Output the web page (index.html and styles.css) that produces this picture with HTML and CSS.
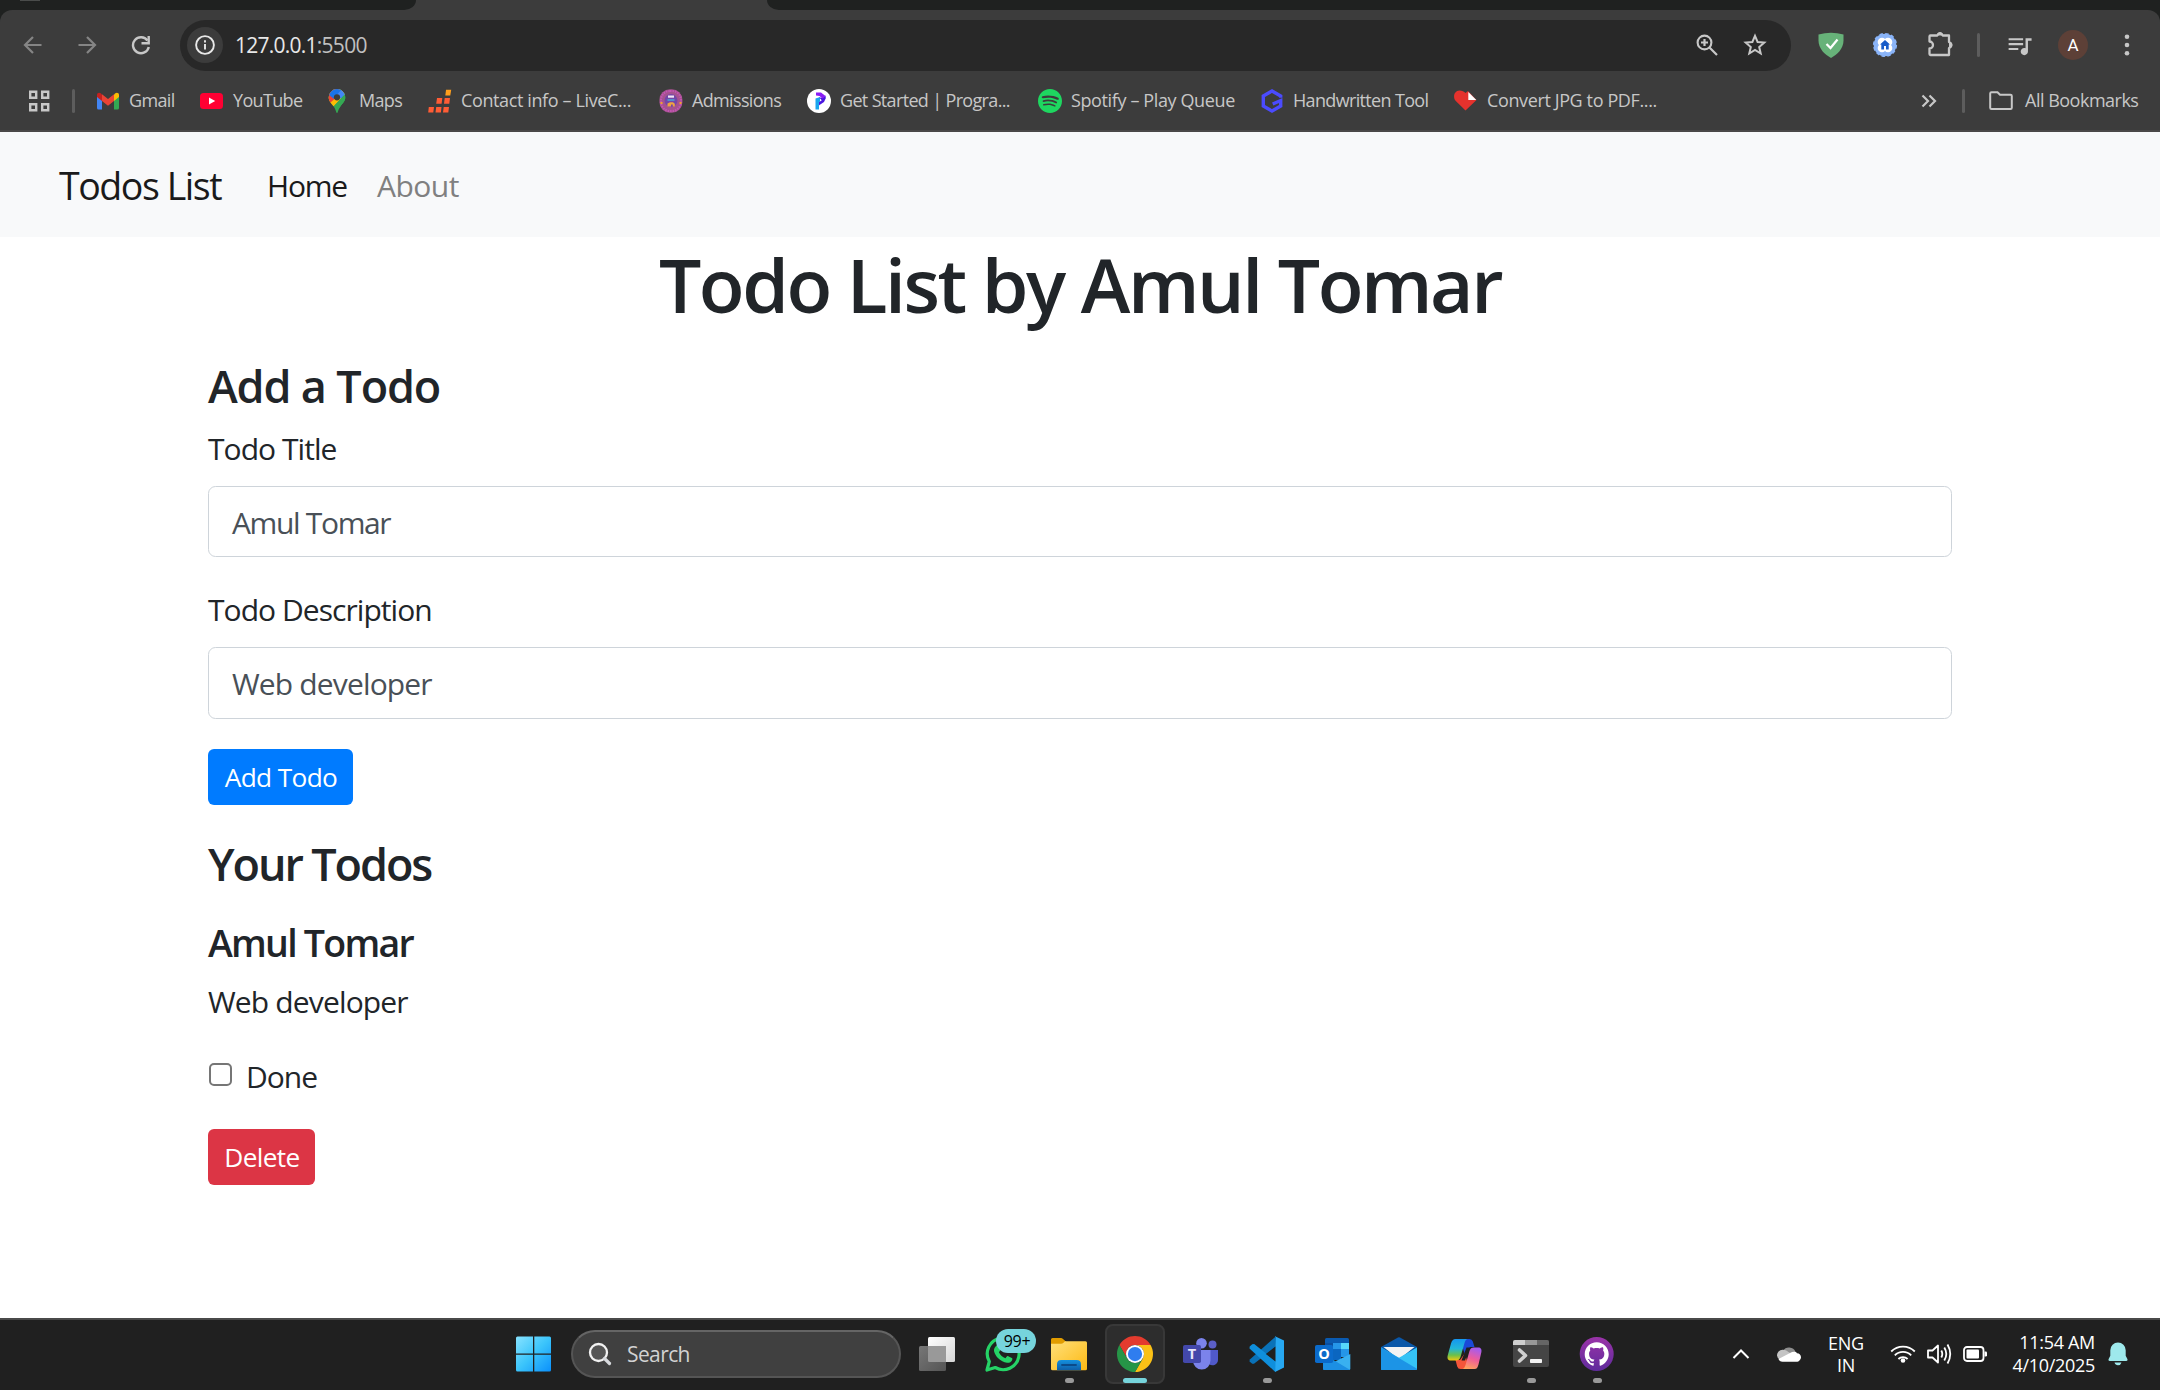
FILE: index.html
```html
<!DOCTYPE html>
<html lang="en">
<head>
<meta charset="utf-8">
<title>Todos List</title>
<link rel="stylesheet" href="styles.css">
</head>
<body>
<div class="screen">

  <header class="browser">
    <div class="tabstrip">
      <div class="tabs-left"><span class="tab-icon"></span></div>
      <div class="tabs-right"></div>
    </div>

    <div class="chrome-panel">
    <div class="toolbar">
      <div class="nav-buttons">
        <svg class="dim" width="20" height="20" viewBox="0 0 20 20"><path d="M18.500 10H2.500M10 2L2 10l8 8" fill="none" stroke="currentColor" stroke-width="2.200"/></svg>
        <svg class="dim" width="20" height="20" viewBox="0 0 20 20"><path d="M1.500 10h16M10 2l8 8-8 8" fill="none" stroke="currentColor" stroke-width="2.200"/></svg>
        <svg width="20" height="20" viewBox="0 0 20 20"><path d="M16.500 5.500A8 8 0 1 0 17.800 12" fill="none" stroke="currentColor" stroke-width="2.400"/><path d="M17.700 1v7.200h-7.200" fill="none" stroke="currentColor" stroke-width="2.400"/></svg>
      </div>
      <div class="omnibox">
        <span class="site-info">
          <svg width="22" height="22" viewBox="0 0 22 22"><circle cx="11" cy="11" r="8.900" fill="none" stroke="currentColor" stroke-width="1.900"/><path d="M11 10v5.500M11 6.200v2.200" stroke="currentColor" stroke-width="1.900"/></svg>
        </span>
        <span class="url">127.0.0.1<span class="port">:5500</span></span>
        <svg class="zoom-icon" width="24" height="24" viewBox="0 0 24 24"><circle cx="9.500" cy="9.500" r="6.900" fill="none" stroke="currentColor" stroke-width="2.100"/><path d="M14.500 14.500l7.500 7.500M9.500 6v7M6 9.500h7" fill="none" stroke="currentColor" stroke-width="2.200"/></svg>
        <svg width="24" height="24" viewBox="0 0 24 24"><path d="M12 2.800l2.600 6.200 6.700.6-5.100 4.400 1.500 6.500L12 17l-5.700 3.500 1.500-6.500L2.700 9.600l6.700-.6z" fill="none" stroke="currentColor" stroke-width="2"/></svg>
      </div>
      <div class="extensions">
        <svg width="26" height="26" viewBox="0 0 26 26"><path d="M.5 2.500Q13-1.200 25.500 2.500V8.500C25.500 17 19 22.500 13 26 7 22.500.5 17 .5 8.500z" fill="#67b279"/><path d="M8.500 12l4 4 7-8.500" fill="none" stroke="#fff" stroke-width="2.200"/></svg>
        <svg width="26" height="26" viewBox="0 0 26 26"><circle cx="13" cy="13" r="11.300" fill="#8ab4f8"/><circle cx="13" cy="13" r="11.300" fill="none" stroke="#8ab4f8" stroke-width="1.600" stroke-dasharray="3.500 2.400"/><g fill="#fff"><circle cx="10" cy="10" r="4.300"/><circle cx="16" cy="10" r="4.300"/><circle cx="10" cy="16" r="4.300"/><circle cx="16" cy="16" r="4.300"/></g><path d="M13 8l-5 4.500h1.300v5H12V14h2v3.500h2.700v-5H18z" fill="#1a5dc8"/></svg>
        <svg width="28" height="28" viewBox="0 0 28 28"><path d="M4.500 5.500h6.700a3 3 0 0 1 5.600 0h6.200v6.500a3.200 3.200 0 0 1 0 6v7H4.500a1 1 0 0 1-1-1v-5.500a3.500 3.500 0 0 0 0-7V6.500a1 1 0 0 1 1-1z" fill="none" stroke="currentColor" stroke-width="2.300" stroke-linejoin="round"/><path d="M11 5.500a3 3.500 0 0 1 6 0zM23 12a3.500 3 0 0 1 0 6z" fill="currentColor"/></svg>
        <span class="divider"></span>
        <svg class="media" width="29" height="29" viewBox="0 0 24 24"><path fill="currentColor" d="M15 6H3v1.700h12V6zm0 4H3v1.700h12V10zM3 15.700h8V14H3v1.700zM17 6v8.180c-.31-.11-.65-.18-1-.18-1.660 0-3 1.340-3 3s1.340 3 3 3 3-1.340 3-3V8h3V6h-5z"/></svg>
        <span class="avatar">A</span>
        <svg class="menu" width="6" height="24" viewBox="0 0 6 24"><g fill="currentColor"><circle cx="3" cy="3.800" r="2.300"/><circle cx="3" cy="12" r="2.300"/><circle cx="3" cy="20.200" r="2.300"/></g></svg>
      </div>
    </div>

    <nav class="bookmarks">
      <svg width="24" height="24" viewBox="0 0 24 24"><path d="M2 2h6v6H2zM14 2h6v6h-6zM2 14.500h6v6H2zM14 14.500h6v6h-6z" transform="translate(.2 .8)" fill="none" stroke="currentColor" stroke-width="2.400"/></svg>
      <span class="divider"></span>
      <span class="bookmark"><svg width="24" height="24" viewBox="0 0 24 24"><path d="M1 6v13q0 1.500 1.500 1.500H6V10z" fill="#4285f4"/><path d="M23 6v13q0 1.500-1.500 1.500H18V10z" fill="#34a853"/><path d="M18 5.500V12l5-4V6c0-2.500-2.500-3-4-1.500z" fill="#fbbc04"/><path d="M6 5.500V12L1 8V6c0-2.500 2.500-3 4-1.500z" fill="#c5221f"/><path d="M6 5.200l6 4.800 6-4.800V12l-6 4.800L6 12z" fill="#ea4335"/></svg><span class="tight">Gmail</span></span>
      <span class="bookmark"><svg width="24" height="24" viewBox="0 0 24 24"><rect x="0" y="4" width="23" height="16" rx="3.500" fill="#ff0033"/><path d="M9 8.500v7l6.200-3.500z" fill="#fff"/></svg><span class="tight">YouTube</span></span>
      <span class="bookmark"><svg width="24" height="24" viewBox="0 0 24 24"><clipPath id="pin"><path d="M11 0a8.300 8.300 0 0 0-8.300 8.300c0 4 2.500 6 4.600 8.700 1.900 2.500 2.400 4.500 3.100 6.500.3.700.9.700 1.200 0 .7-2 1.200-4 3.100-6.500 2.100-2.700 4.600-4.700 4.600-8.700A8.300 8.300 0 0 0 11 0z"/></clipPath><g clip-path="url(#pin)"><rect width="24" height="24" fill="#34a853"/><path d="M0 0h24L8 17 0 20z" fill="#fbbc04"/><path d="M0 0h13v6L4 14 0 8z" fill="#ea4335"/><path d="M5 0h12l-9 10-5-4z" fill="#1a73e8"/><path d="M16 0l5 7-8 3-3-3z" fill="#4285f4"/><path d="M19 5l2 5-8 10-5-3z" fill="#34a853"/></g><circle cx="11" cy="8.300" r="3.100" fill="#3c3c3c"/></svg><span class="tight">Maps</span></span>
      <span class="bookmark"><svg width="24" height="24" viewBox="0 0 24 24"><path d="M18 .7h5.200l-.9 5.700h-5z" fill="#ff9f1c"/><path d="M9 9h5.300l-.7 5.800H8.200zM16.700 9H22l-.7 5.800H16zM.8 18H6l-.7 5.500H.2zM8.200 18h5.300l-.6 5.500H7.500zM15.700 18H21l-.7 5.500H15z" fill="#ff5c35"/></svg><span>Contact info – LiveC...</span></span>
      <span class="bookmark"><svg width="24" height="24" viewBox="0 0 24 24"><rect x=".4" y=".2" width="23" height="23.600" rx="10.500" fill="#a5528f"/><rect x="2" y="2" width="20" height="20" rx="9" fill="none" stroke="#c455b4" stroke-width="2" stroke-dasharray="1.500 1"/><circle cx="12" cy="11.500" r="6.500" fill="#7446a8"/><path d="M9 6.500h6v2.200H9z" fill="#f3e4f4"/><path d="M8.500 11h7" stroke="#4aa6d8" stroke-width="1.500"/><path d="M8.500 17.500v-3l2.500-1.200h3l1.800 1.500v2.700h-2v-2h-1.800v2z" fill="#f0a340"/><path d="M1.500 14h2M20.500 14h2" stroke="#f0a030" stroke-width="2"/></svg><span class="tight">Admissions</span></span>
      <span class="bookmark"><svg width="24" height="24" viewBox="0 0 24 24"><circle cx="12" cy="12" r="12" fill="#fff"/><path d="M8.500 9.500L13 8v4.500l-1 1.500v6.500H8.500z" fill="#1aa5ee"/><path d="M12.200 8.500l3.300.2 3-2.200.3 2.700-1.800 3.800-4.500 3-.5.500v-3.300l2.800-2z" fill="#4a16e0"/><path d="M9 3.500h5l4.500 3.500-3 2.500-3-2.500-3.500-.5z" fill="#8a1cf4"/></svg><span class="tight">Get Started | Progra...</span></span>
      <span class="bookmark"><svg width="24" height="24" viewBox="0 0 24 24"><path fill="#1ed760" d="M12 0C5.400 0 0 5.400 0 12s5.400 12 12 12 12-5.400 12-12S18.660 0 12 0zm5.521 17.340c-.24.359-.66.48-1.021.24-2.820-1.740-6.360-2.101-10.561-1.141-.418.122-.779-.179-.899-.539-.12-.421.18-.78.54-.9 4.560-1.021 8.520-.6 11.640 1.320.42.18.479.659.301 1.020zm1.440-3.300c-.301.42-.841.6-1.262.3-3.239-1.980-8.159-2.580-11.939-1.380-.479.12-1.020-.12-1.140-.6-.12-.48.12-1.021.6-1.141C9.600 9.900 15 10.561 18.720 12.840c.361.181.54.78.241 1.200zm.12-3.360C15.240 8.400 8.820 8.160 5.160 9.301c-.6.179-1.200-.181-1.380-.721-.18-.601.18-1.200.72-1.381 4.260-1.260 11.280-1.020 15.721 1.621.539.3.719 1.020.419 1.560-.299.421-1.020.599-1.559.3z"/></svg><span>Spotify – Play Queue</span></span>
      <span class="bookmark"><svg width="24" height="24" viewBox="0 0 24 24"><path d="M20.700 8.800V7L12 2 3.300 7v10L12 22l8.700-5v-5.500l-8 3.500" fill="none" stroke="#4b4bff" stroke-width="3.400"/></svg><span class="tight">Handwritten Tool</span></span>
      <span class="bookmark"><svg width="24" height="24" viewBox="0 0 24 24"><path d="M11.500 21.500L1.800 12C-1.500 8.500 0 1.800 5.500 1.500c2.500 0 4.500 1 6 2.500l2.500-2 8.500 9z" fill="#e5322d"/><path d="M14.300 3v8h8z" fill="#fff"/></svg><span>Convert JPG to PDF....</span></span>
      <span></span>
      <svg width="16" height="24" viewBox="0 0 16 24"><path d="M1.500 6.500L7 12l-5.500 5.500M8.500 6.500L14 12l-5.500 5.500" fill="none" stroke="currentColor" stroke-width="2.200"/></svg>
      <span class="divider"></span>
      <span class="bookmark all"><svg width="26" height="24" viewBox="0 0 26 24"><path d="M2.200 4.500q0-1.300 1.300-1.300h6l2.500 2.600h10.500q1.300 0 1.300 1.300v11.700q0 1.200-1.300 1.200h-19q-1.300 0-1.300-1.200z" fill="none" stroke="currentColor" stroke-width="2"/></svg><span>All Bookmarks</span></span>
    </nav>
    </div>
  </header>

  <nav class="navbar">
    <span class="brand">Todos List</span>
    <span class="nav-link active">Home</span>
    <span class="nav-link">About</span>
  </nav>

  <main class="container">
    <h1>Todo List by Amul Tomar</h1>
    <h4>Add a Todo</h4>
    <div class="form-group">
      <label>Todo Title</label>
      <div class="form-control name">Amul Tomar</div>
    </div>
    <div class="form-group">
      <label>Todo Description</label>
      <div class="form-control">Web developer</div>
    </div>
    <button class="btn btn-primary">Add Todo</button>
    <h4 class="list-heading">Your Todos</h4>
    <h5>Amul Tomar</h5>
    <p>Web developer</p>
    <div class="check"><span class="box"></span><span>Done</span></div>
    <button class="btn btn-danger">Delete</button>
  </main>

  <footer class="taskbar">
    <div class="slot">
      <svg width="36" height="36" viewBox="0 0 36 36"><defs><linearGradient id="win" gradientUnits="userSpaceOnUse" x1="0" y1="0" x2="36" y2="36"><stop offset="0" stop-color="#8be4ff"/><stop offset=".5" stop-color="#3cc5fb"/><stop offset="1" stop-color="#0a8ffb"/></linearGradient></defs><path fill="url(#win)" d="M2.500 .5h15.500v17H1V2Q1 .500 2.500 .5zM19.300.5h15.200q1.500 0 1.500 1.500v15.500H19.300zM1 18.800H18v16.700H2.500Q1 35.500 1 34zM19.300 18.800H36V34q0 1.500-1.500 1.500H19.300z"/></svg>
    </div>
    <div class="search">
      <svg width="24" height="24" viewBox="0 0 24 24"><circle cx="10.500" cy="10.500" r="8.500" fill="#555" stroke="#f2f2f2" stroke-width="2.300"/><path d="M16.500 16.500l5 5" stroke="#d8dade" stroke-width="3.200" stroke-linecap="round"/></svg>
      <span>Search</span>
    </div>
    <div class="apps">
    <div class="slot">
      <svg width="36" height="36" viewBox="0 0 36 36"><defs><linearGradient id="tv" x1="0" y1="0" x2="1" y2="1"><stop offset="0" stop-color="#fff"/><stop offset="1" stop-color="#d6d6d6"/></linearGradient><linearGradient id="tv2" x1="0" y1="0" x2="1" y2="1"><stop offset="0" stop-color="#777"/><stop offset="1" stop-color="#555"/></linearGradient></defs><rect x="9" y="1" width="27" height="25" rx="1.500" fill="url(#tv)"/><rect x="0" y="10" width="27" height="25" rx="1.500" fill="url(#tv2)"/><path d="M9 10h18v16H10.500Q9 26 9 24.500z" fill="#999"/></svg>
    </div>
    <div class="slot">
      <svg width="36" height="36" viewBox="0 0 36 36"><path d="M2 34l2.300-8.500A15.900 15.900 0 1 1 10.200 31.500z" fill="none" stroke="#25d366" stroke-width="3.200" stroke-linejoin="round"/><path d="M11.500 9.500c.8-.8 2-.7 2.500.3l1.500 3.500c.2.600 0 1.200-1.600 2.900 1.400 3 3.700 4.800 6.600 6 1.600-2 2-2.300 2.700-2l3.600 1.800c.7.400.7 1 .3 2.200-.7 1.900-3.200 2.900-5.100 2.600-6.500-1.200-11.800-6.200-13-11.800-.3-2 .9-4 2.500-5.500z" fill="#25d366"/></svg>
      <span class="badge">99+</span>
    </div>
    <div class="slot running">
      <svg width="36" height="36" viewBox="0 0 36 36"><defs><linearGradient id="fo" x1="0" y1="0" x2="1" y2="1"><stop offset="0" stop-color="#ffe07a"/><stop offset="1" stop-color="#fdb913"/></linearGradient><linearGradient id="fb" x1="0" y1="0" x2="0" y2="1"><stop offset="0" stop-color="#1490df"/><stop offset="1" stop-color="#0f5ea8"/></linearGradient></defs><path d="M0 3.500Q0 2 1.500 2h8.500q1 0 2 1l4 3.500v3H0z" fill="#e19c00"/><path d="M0 7.800h10q1.500 0 2.500-1l1.500-1.500H34.500Q36 5.300 36 6.800v26q0 1.500-1.500 1.500h-33Q0 34.300 0 32.800z" fill="url(#fo)"/><path d="M6 34.300v-6q0-4.300 4.300-4.300h15.400q4.300 0 4.300 4.300v6z" fill="url(#fb)"/><path d="M11 29h14" stroke="#0b4a8a" stroke-width="1.800" stroke-linecap="round"/></svg>
    </div>
    <div class="slot current">
      <svg width="36" height="36" viewBox="0 0 48 48"><path d="M24 12h20.780A24 24 0 0 0 3.220 12L13.600 30A12 12 0 0 1 24 12z" fill="#e33b2e"/><path d="M34.390 30L24 48A24 24 0 0 0 44.780 12H24A12 12 0 0 1 34.390 30z" fill="#fbc116"/><path d="M13.600 30L3.220 12A24 24 0 0 0 24 48L34.390 30A12 12 0 0 1 13.600 30z" fill="#269547"/><circle cx="24" cy="24" r="12" fill="#fff"/><circle cx="24" cy="24" r="9.500" fill="#2f7def"/></svg>
    </div>
    <div class="slot">
      <svg width="36" height="36" viewBox="0 0 36 36"><circle cx="29.500" cy="8.500" r="4" fill="#5b5fc7"/><circle cx="18.500" cy="7.300" r="5.300" fill="#7b83eb"/><path d="M26 14h9v9.500a5.500 5.500 0 0 1-9 4.500z" fill="#5059c9"/><path d="M10 14h17.500v10.500a8.700 9 0 0 1-17.500 0z" fill="#7b83eb"/><rect x="0" y="9" width="18" height="18" rx="1.800" fill="#4348ab"/><text x="9" y="23.300" text-anchor="middle" class="glyph teams-letter">T</text></svg>
    </div>
    <div class="slot running">
      <svg width="36" height="36" viewBox="0 0 36 36"><path d="M26 .2L35 4.500v27L26 36z" fill="#27a8f2"/><path d="M27 .3L.8 23.500l-.3 2 2.700 2.300 1.800-.1L26.500 11z" fill="#0a72b8"/><path d="M26.300 35.900L.5 12.500l.2-2 2.500-2.300 2-.1L26.500 25z" fill="#0f8fdc"/><path d="M26.500 10.500v15L16.800 18z" fill="#202020"/></svg>
    </div>
    <div class="slot">
      <svg width="36" height="36" viewBox="0 0 36 36"><rect x="10" y="2" width="24" height="18" rx="1.500" fill="#0a5ab0"/><path d="M10 7h8v6h-8z" fill="#0a4fa0"/><path d="M18 7h8v6h-8z" fill="#2596e8"/><path d="M26 7h8v6h-8z" fill="#57d7fb"/><path d="M18 13h8v11h-8z" fill="#0b66c0"/><path d="M26 13h8v8h-8z" fill="#2596e8"/><path d="M8 18l27.500 16H9.500Q8 34 8 32.500z" fill="#168de2"/><path d="M35.300 18v14.500q0 1.500-1.500 1.500H30L20.500 25.200z" fill="#39b0f0"/><path d="M20.500 25.200L35.300 34H9.500Q8 34 8 32.500V27h9z" fill="#1c8fe3"/><rect x="0" y="9" width="18" height="18" rx="1.800" fill="#0b6bcb"/><text x="9" y="23" text-anchor="middle" class="glyph outlook-letter">O</text></svg>
    </div>
    <div class="slot">
      <svg width="36" height="36" viewBox="0 0 36 36"><path d="M0 11L17 1.400q1-.5 2 0L36 11v4L18 24 0 15z" fill="#0a57a8"/><path d="M2.500 11h31L19 22.500h-2z" fill="#f3f3f3"/><path d="M0 11.500L18 21.700 36 11.500v21.300q0 1.200-1.200 1.200H1.200Q0 34 0 32.800z" fill="#35c3f5"/><path d="M0 11.500L36 32.800q0 1.200-1.200 1.200H1.200Q0 34 0 32.800z" fill="#1c94e6"/></svg>
    </div>
    <div class="slot">
      <svg width="36" height="36" viewBox="0 0 36 36"><defs><linearGradient id="c1" x1="0" y1="0" x2="0" y2="1"><stop offset="0" stop-color="#1596f0"/><stop offset=".45" stop-color="#22b7d8"/><stop offset=".75" stop-color="#6cc04a"/><stop offset="1" stop-color="#f2c80f"/></linearGradient><linearGradient id="c2" x1=".6" y1="0" x2=".3" y2="1"><stop offset="0" stop-color="#a45cf0"/><stop offset=".5" stop-color="#ef5c9a"/><stop offset="1" stop-color="#ffa25c"/></linearGradient></defs><path d="M13 3h9.500q2.500 0 3.300 2.500L27.500 11h-4.500L18 19z" fill="#1a49d8"/><path d="M22 33H13.500q-2.500 0-3.300-2.500L8.500 24H13l5-7z" fill="#f4553a"/><path d="M8.500 3h12c-1.500.5-2.300 1.800-3 4l-4 14c-.8 2.500-2 3.500-4.500 3.500H4c-3 0-4-2-3.300-5L4 7.500C5 4.500 6 3 8.500 3z" fill="url(#c1)"/><path d="M27.500 33h-12c1.500-.5 2.300-1.800 3-4l4-14c.8-2.500 2-3.500 4.500-3.500h4c3 0 4 2 3.300 5L31.500 28.500c-1 3-1.500 4.500-4 4.500z" fill="url(#c2)"/><path d="M19.500 11.500h3.500l-5 13H14.500z" fill="#202020"/></svg>
    </div>
    <div class="slot running">
      <svg width="36" height="36" viewBox="0 0 36 36"><rect x="0" y="4" width="36" height="27" rx="2" fill="#454545"/><path d="M0 9V6q0-2 2-2h10v5z" fill="#cfcfcf"/><path d="M12 4h12v5H12z" fill="#999"/><path d="M24 4h10q2 0 2 2v3H24z" fill="#666"/><path d="M6.500 14l6 5.500-6 5.500" fill="none" stroke="#d0d0d0" stroke-width="3.600" stroke-linecap="round" stroke-linejoin="round"/><rect x="17" y="23" width="12" height="4" rx=".8" fill="#f2f2f2"/></svg>
    </div>
    <div class="slot running">
      <svg width="36" height="36" viewBox="0 0 36 36"><defs><linearGradient id="gh" x1="0" y1="0" x2="0" y2="1"><stop offset="0" stop-color="#9a33a8"/><stop offset="1" stop-color="#5f2b9c"/></linearGradient></defs><circle cx="17.700" cy="18" r="17" fill="url(#gh)"/><path transform="translate(5.700 6)" fill="#fff" d="M12 .297c-6.630 0-12 5.373-12 12 0 5.303 3.438 9.800 8.205 11.385.6.113.82-.258.82-.577 0-.285-.01-1.040-.015-2.040-3.338.724-4.042-1.610-4.042-1.610C4.422 18.070 3.633 17.700 3.633 17.700c-1.087-.744.084-.729.084-.729 1.205.084 1.838 1.236 1.838 1.236 1.070 1.835 2.809 1.305 3.495.998.108-.776.417-1.305.76-1.605-2.665-.3-5.466-1.332-5.466-5.930 0-1.310.465-2.380 1.235-3.220-.135-.303-.54-1.523.105-3.176 0 0 1.005-.322 3.300 1.230.96-.267 1.980-.399 3-.405 1.020.006 2.040.138 3 .405 2.280-1.552 3.285-1.230 3.285-1.230.645 1.653.24 2.873.12 3.176.765.84 1.230 1.910 1.230 3.220 0 4.610-2.805 5.625-5.475 5.920.42.36.81 1.096.81 2.220 0 1.606-.015 2.896-.015 3.286 0 .315.21.69.825.57C20.565 22.092 24 17.592 24 12.297c0-6.627-5.373-12-12-12"/></svg>
    </div>
    </div>

    <div class="tray">
      <svg width="18" height="12" viewBox="0 0 18 12"><path d="M1.500 10L9 2.500l7.500 7.500" fill="none" stroke="#fff" stroke-width="2"/></svg>
      <svg class="cloud" width="24" height="18" viewBox="0 0 24 18"><path d="M6 6a7 7 0 0 1 12.500 1L12 12z" fill="#8f8f8f"/><path d="M5.500 4.800c3-.2 5 1.700 8 3.400L3.500 15A5.200 5.200 0 0 1 0 10.500 5.500 5.500 0 0 1 5.500 4.800z" fill="#c4c4c4"/><path d="M13 8c3-1.800 6-1.500 7 .2 2.500 0 4 2 4 4s-2 4.600-4.500 4.600H5.500C3.500 16.800 2 15.500 1.500 14z" fill="#fff"/></svg>
      <div class="lang"><span>ENG</span><span>IN</span></div>
      <div class="status">
        <svg width="26" height="20" viewBox="0 0 26 20"><g fill="none" stroke="#fff" stroke-width="1.800"><path d="M1.200 7.500a16.700 16.700 0 0 1 23.600 0"/><path d="M4.800 11.300a11.600 11.600 0 0 1 16.400 0"/><path d="M8.400 15a6.500 6.500 0 0 1 9.200 0"/></g><circle cx="13" cy="16.500" r="2.300" fill="#fff"/></svg>
        <svg width="26" height="22" viewBox="0 0 26 22"><g fill="none" stroke="#fff" stroke-width="1.800" stroke-linejoin="round"><path d="M2 7.500h4.500L12 2.500v17l-5.500-5H2z"/><path d="M15.300 7.500q2 3.500 0 7M18.300 4.500q4 6.500 0 13M21.500 1.500q5.500 9.500 0 19"/></g></svg>
        <svg width="26" height="18" viewBox="0 0 26 18"><rect x="2" y="2" width="19.500" height="14" rx="3" fill="none" stroke="#fff" stroke-width="1.800"/><rect x="4.500" y="4.500" width="12.500" height="9" rx="1" fill="#fff"/><path d="M22.500 6.500h1.200q1.300 0 1.300 1.300v2.400q0 1.300-1.300 1.300h-1.200z" fill="#fff"/></svg>
      </div>
      <div class="clock"><span>11:54 AM</span><span>4/10/2025</span></div>
      <svg width="20" height="24" viewBox="0 0 20 24"><path d="M10 .5a7.700 7.700 0 0 0-7.700 7.700v5.600L.5 17.300q-.4 1.700 1.200 1.700h16.600q1.600 0 1.200-1.700l-1.800-3.500V8.200A7.700 7.700 0 0 0 10 .5zM6.500 20.500h7q-.8 2.800-3.500 2.800t-3.500-2.800z" fill="#9ee9ec"/></svg>
    </div>
  </footer>
</div>
</body>
</html>
```
FILE: styles.css
```css
* { box-sizing: border-box; }

body {
  margin: 0;
  background: #fff;
  color: #212529;
  font-family: "Open Sans", "Noto Sans", sans-serif;
  font-size: 30px;
  line-height: 1.5;
}

svg { display: block; flex: none; }

.screen {
  display: flex;
  flex-direction: column;
  width: 2160px;
  height: 1390px;
  overflow: hidden;
}

/* Browser chrome */
.browser {
  flex: none;
  height: 132px;
  background: #1f2120;
  color: #c7c7c7;
}

.tabstrip {
  display: flex;
  justify-content: space-between;
  height: 10px;
  background: #3c3c3c;
}

.tabs-left {
  width: 416px;
  padding-left: 20px;
  background: #1f2120;
  border-bottom-right-radius: 14px 12px;
}

.tab-icon {
  display: block;
  width: 20px;
  height: 1px;
  background: #4a4c4b;
}

.tabs-right {
  width: 1393px;
  background: #1f2120;
  border-bottom-left-radius: 14px 12px;
}

.chrome-panel {
  height: 122px;
  background: #3c3c3c;
  border-bottom: 2px solid #4a4848;
  border-radius: 12px 12px 0 0;
}

.toolbar {
  display: flex;
  align-items: center;
  height: 70px;
  padding-left: 23px;
}

.nav-buttons {
  display: flex;
  gap: 34px;
  width: 157px;
}

.dim { color: #858585; }

.omnibox {
  display: flex;
  align-items: center;
  width: 1611px;
  height: 51px;
  padding: 0 24px 0 7px;
  border-radius: 26px;
  background: #282828;
}

.site-info {
  display: flex;
  align-items: center;
  justify-content: center;
  width: 36px;
  height: 36px;
  border-radius: 50%;
  background: #3c3c3c;
  color: #e8e8e8;
}

.url {
  flex: 1;
  margin-left: 12px;
  font-size: 21px;
  line-height: 30px;
  letter-spacing: -0.75px;
  color: #e8e8e8;
}

.port { color: #c0c0c0; }

.zoom-icon { margin-right: 24px; }

.extensions {
  display: flex;
  align-items: center;
  margin-left: 27px;
}

.extensions svg:nth-child(2) { margin-left: 28px; }
.extensions svg:nth-child(3) { margin: -2px 0 0 28px; }

.divider {
  width: 3px;
  height: 24px;
  border-radius: 2px;
  background: #5d5d5d;
}

.extensions .divider { margin-left: 23px; }
.extensions .media { margin-left: 25px; margin-top: 1px; }

.avatar {
  width: 30px;
  height: 30px;
  margin-left: 24px;
  border-radius: 50%;
  background: #5d4037;
  color: #fff;
  font: 17px/31px Roboto, sans-serif;
  text-align: center;
}

.menu { margin-left: 36px; }

.bookmarks {
  display: grid;
  grid-template-columns: 44px 24px 104px 126px 102px 231px 148px 231px 222px 194px 203px 1fr 41px 26px 172px;
  align-items: center;
  height: 42px;
  padding-left: 28px;
  font-size: 18px;
  line-height: 24px;
}

.bookmark {
  display: flex;
  align-items: center;
  gap: 9px;
  white-space: nowrap;
  letter-spacing: -0.38px;
}

.bookmark span { margin-top: -2px; }
.bookmark .tight { letter-spacing: -0.66px; }

.bookmark.all { gap: 11px; letter-spacing: -0.5px; }

/* Site navbar */
.navbar {
  display: flex;
  flex: none;
  align-items: center;
  height: 105px;
  padding: 0 59px;
  background: #f8f9fa;
  white-space: nowrap;
}

.brand {
  width: 163px;
  margin-right: 30px;
  padding-top: 3px;
  font-size: 37.5px;
  letter-spacing: -1.45px;
  color: #1a1a1a;
}

.nav-link {
  width: 110px;
  padding: 1px 15px 0;
  letter-spacing: -0.5px;
  color: #808080;
}

.nav-link.active {
  letter-spacing: -1.2px;
  color: #1a1a1a;
}

/* Page content */
.container {
  flex: none;
  width: 1744px;
  height: 1081px;
  margin: 0 auto;
}

h1, h4, h5 {
  margin: 0;
  font-weight: 600;
}

h1 {
  margin-bottom: 25px;
  font-size: 75px;
  line-height: 95px;
  letter-spacing: -2.45px;
  text-align: center;
}

h4 {
  margin-bottom: 11px;
  font-size: 45px;
  line-height: 58px;
  letter-spacing: -1.15px;
}

h5 {
  margin-bottom: 12px;
  font-size: 37.5px;
  line-height: 48px;
  letter-spacing: -1.75px;
}

.list-heading {
  margin: 30px 0 26px;
  letter-spacing: -2.1px;
}

.form-group { margin-bottom: 30px; }

label {
  display: block;
  height: 45px;
  margin-bottom: 15px;
  line-height: 46px;
  letter-spacing: -0.95px;
}

.form-control {
  height: 71.25px;
  padding: 12px 23px;
  border: 1px solid #ced4da;
  border-radius: 7.5px;
  color: #495057;
  line-height: 48px;
  letter-spacing: -0.85px;
}

.form-control.name { letter-spacing: -1.35px; }

.btn {
  display: block;
  height: 56.4px;
  padding: 0 0 0 1px;
  border: 0;
  border-radius: 6px;
  color: #fff;
  font-family: inherit;
  font-size: 26.25px;
  letter-spacing: -0.65px;
  text-align: center;
}

.btn-primary { width: 145px; background: #007bff; }
.btn-danger { width: 107px; background: #dc3545; }

p {
  height: 45px;
  margin: 0 0 30px;
  line-height: 46px;
  letter-spacing: -0.85px;
}

.check {
  display: flex;
  align-items: center;
  gap: 14px;
  height: 45px;
  margin-bottom: 30px;
  letter-spacing: -1px;
}

.box {
  width: 23px;
  height: 23px;
  margin: -3px 0 0 1px;
  border: 2px solid #767676;
  border-radius: 5px;
}

/* Windows taskbar */
.taskbar {
  display: flex;
  flex: none;
  align-items: center;
  height: 72px;
  padding-left: 500px;
  background: #202020;
  box-shadow: inset 0 2px #4a4a4a;
  color: #fff;
}

.slot {
  position: relative;
  display: flex;
  align-items: center;
  justify-content: center;
  width: 66px;
  height: 72px;
}

.search {
  display: flex;
  align-items: center;
  gap: 15px;
  width: 330px;
  height: 48px;
  margin-left: 5px;
  padding: 0 15px;
  border: 2px solid #555;
  border-top-color: #656565;
  border-radius: 24px;
  background: #404040;
  color: #d2d2d2;
  font-size: 21px;
  line-height: 28px;
  letter-spacing: -0.6px;
}

.apps { display: flex; margin-left: 3px; }

/* Running and focused indicators lie under the app icons */
.running::after,
.current::after {
  content: "";
  position: absolute;
  bottom: 7px;
  left: 50%;
  width: 9px;
  height: 5px;
  margin-left: -4px;
  border-radius: 3px;
  background: #999;
}

.current::after {
  width: 24px;
  margin-left: -12px;
  background: #76d4dc;
}

.current::before {
  content: "";
  position: absolute;
  inset: 6px 3px;
  border: 2px solid #383838;
  border-radius: 8px;
  background: #2d2d2d;
}

.current svg { position: relative; }

.badge {
  position: absolute;
  top: 11px;
  left: 26px;
  width: 40px;
  height: 24px;
  padding-left: 2px;
  border-radius: 12px;
  background: #76d4dc;
  color: #000;
  font-size: 16px;
  line-height: 24px;
  letter-spacing: -0.3px;
  text-align: center;
}

.glyph { font-family: "Open Sans", sans-serif; font-weight: 700; fill: #fff; }
.teams-letter { font-size: 14.5px; fill: #e6e6fa; }
.outlook-letter { font-size: 14.5px; }

.tray {
  display: flex;
  align-items: center;
  margin-left: auto;
  padding-right: 32px;
  font-size: 18px;
  line-height: 24px;
}

.cloud { margin-left: 27px; }

.lang {
  display: flex;
  flex-direction: column;
  align-items: center;
  width: 38px;
  margin-left: 26px;
  line-height: 22px;
  letter-spacing: -0.2px;
}

.status {
  display: flex;
  align-items: center;
  gap: 10px;
  margin-left: 25px;
}

.clock {
  display: flex;
  flex-direction: column;
  align-items: flex-end;
  width: 90px;
  margin: 0 13px 0 17px;
  line-height: 23.5px;
  letter-spacing: -0.3px;
  white-space: nowrap;
}
```
